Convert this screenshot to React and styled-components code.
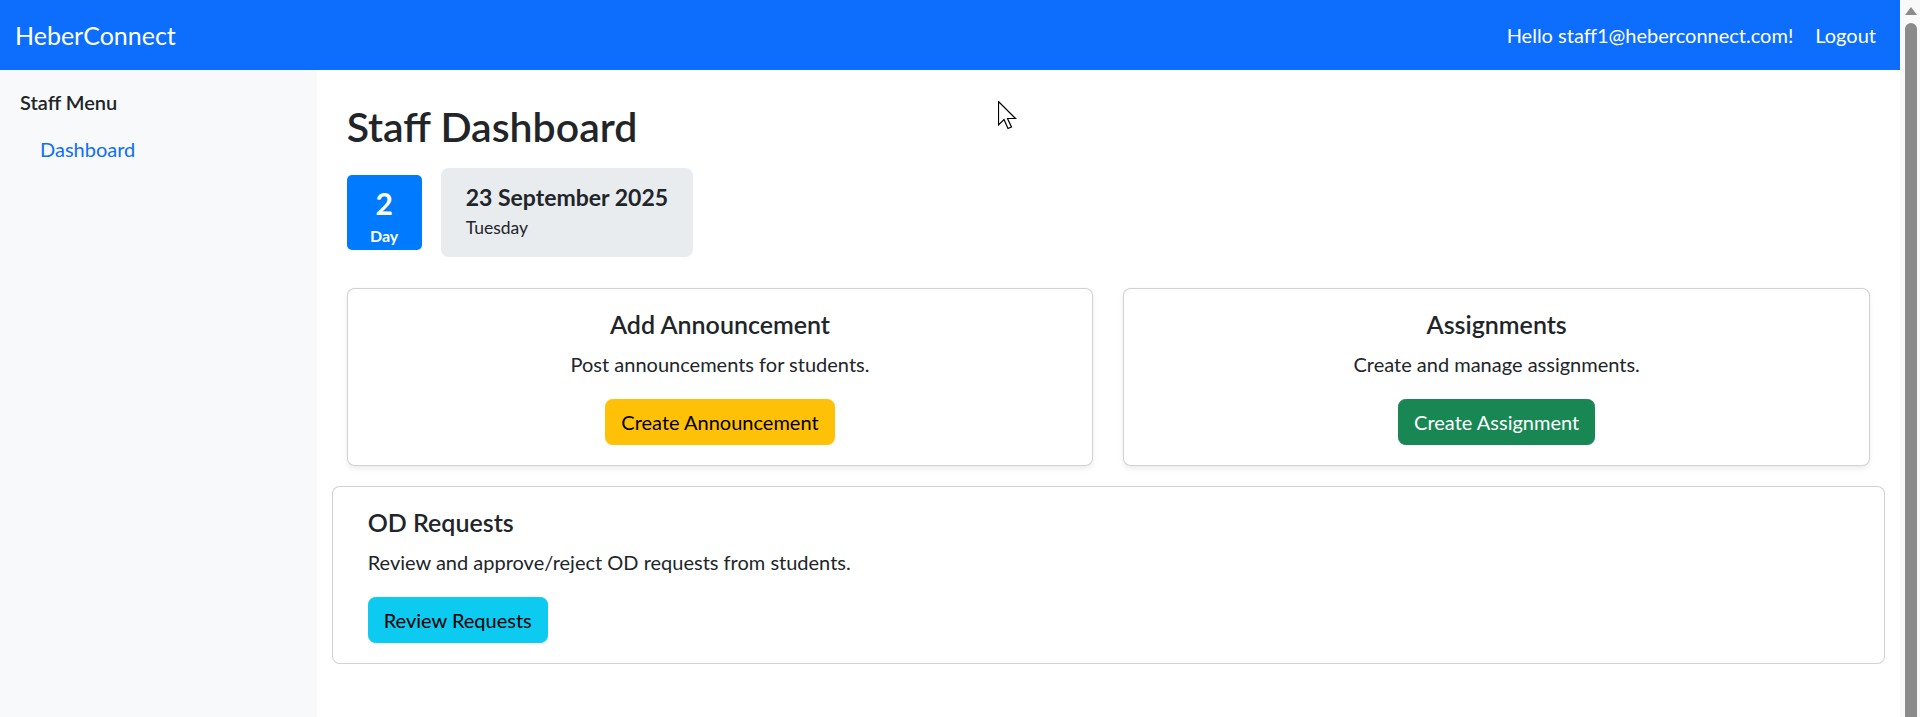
import styled, { createGlobalStyle, css } from "styled-components"

const GlobalStyle = createGlobalStyle`
    html, body {
        margin: 0;
        padding: 0;
        height: 100%;
        overflow: hidden;
    }
    body {
        font-family: Lato, "Noto Sans", "Liberation Sans", sans-serif;
        color: #212529;
        background: #fff;
    }
    * { box-sizing: border-box; }
`

const Shell = styled.div`
    display: flex;
    height: 100vh;
    position: relative;
`

const Page = styled.div`
    flex: 1;
    min-width: 0;
    display: flex;
    flex-direction: column;
`

// fake browser scrollbar on the right edge
const Scrollbar = styled.div`
    width: 20px;
    background: #f9f9f9;
    display: flex;
    flex-direction: column;
    align-items: center;
    padding-top: 7px;
`

const ScrollArrow = styled.div`
    width: 0;
    height: 0;
    border-left: 6px solid transparent;
    border-right: 6px solid transparent;
    border-bottom: 8px solid #8b8b8b;
    margin-left: 1px;
`

const ScrollThumb = styled.div`
    flex: 1;
    width: 12px;
    margin-top: 8px;
    margin-left: 1px;
    background: #8b8b8b;
    border-radius: 6px 6px 0 0;
`

const Navbar = styled.nav`
    height: 70px;
    background: #0d6efd;
    display: flex;
    align-items: center;
    justify-content: space-between;
    padding: 0 14px 0 15px;
    color: #fff;
`

const Brand = styled.a`
    font-size: 25px;
    color: #fff;
    text-decoration: none;
`

const NavRight = styled.div`
    display: flex;
    align-items: center;
    font-size: 20px;
`

const Greeting = styled.span`
    margin-right: 12px;
`

const NavLink = styled.a`
    padding: 10px;
    color: #fff;
    text-decoration: none;
`

const Body = styled.div`
    flex: 1;
    display: flex;
`

const Sidebar = styled.aside`
    flex: 0 0 316.67px;
    background: #f8f9fa;
    padding: 20px;
`

const SidebarTitle = styled.h5`
    margin: 0 0 10px;
    font-size: 20px;
    font-weight: 600;
    line-height: 1.2;
`

const SideLink = styled.a`
    display: block;
    padding: 10px 20px;
    font-size: 20px;
    line-height: 1.5;
    color: #0d6efd;
    text-decoration: none;
`

const Main = styled.main`
    flex: 1;
    min-width: 0;
    padding: 32px 30px 0;
`

const Title = styled.h2`
    margin: 0 0 17px;
    font-size: 41px;
    font-weight: 600;
    line-height: 1.2;
`

const DateRow = styled.div`
    display: flex;
    align-items: center;
    gap: 19px;
    margin-bottom: 31px;
`

const DayBadge = styled.div`
    width: 75px;
    height: 75px;
    border-radius: 5px;
    background: #007bff;
    color: #fff;
    display: flex;
    flex-direction: column;
    align-items: center;
    padding-top: 12px;
    font-weight: 700;
`

const DayNumber = styled.div`
    font-size: 30px;
    line-height: 33px;
`

const DayLabel = styled.div`
    font-size: 16px;
    line-height: 22px;
    margin-top: 5px;
`

const DateCard = styled.div`
    background: #e9ecef;
    border-radius: 7.5px;
    padding: 15px 25px 16px;
`

const DateText = styled.div`
    font-size: 23px;
    font-weight: 700;
    line-height: 28px;
    margin-bottom: 4px;
`

const Weekday = styled.div`
    font-size: 17.5px;
    line-height: 26px;
    margin-top: 2px;
`

const CardRow = styled.div`
    display: grid;
    grid-template-columns: 1fr 1fr;
    gap: 30px;
    margin-bottom: 20px;
`

const Card = styled.div`
    background: #fff;
    border: 1px solid rgba(0, 0, 0, 0.175);
    border-radius: 7.5px;
    padding: ${p => (p.$wide ? "20px 35px" : "20px")};
    text-align: ${p => (p.$center ? "center" : "left")};
    ${p => p.$shadow && css`box-shadow: 0 2.5px 5px rgba(0, 0, 0, 0.075);`}
    ${p => p.$wide && css`margin: 0 -15px;`}
`

const CardTitle = styled.h5`
    margin: 0 0 10px;
    font-size: 25px;
    font-weight: 600;
    line-height: 1.2;
`

const CardText = styled.p`
    margin: 0 0 20px;
    font-size: 20px;
    line-height: 1.5;
`

const variants = {
    warning: { bg: "#ffc107", color: "#000" },
    success: { bg: "#198754", color: "#fff" },
    info: { bg: "#0dcaf0", color: "#000" },
}

const Button = styled.button`
    font-family: inherit;
    font-size: 20px;
    line-height: 1.5;
    padding: 7px 15px;
    border-radius: 7.5px;
    border: 1px solid ${p => variants[p.$variant].bg};
    background: ${p => variants[p.$variant].bg};
    color: ${p => variants[p.$variant].color};
    cursor: pointer;
`

const Cursor = styled.svg`
    position: absolute;
    left: 998px;
    top: 101px;
    pointer-events: none;
`

export default function App() {
    return (
        <>
            <GlobalStyle />
            <Shell>
                <Page>
                    <Navbar>
                        <Brand href="#">HeberConnect</Brand>
                        <NavRight>
                            <Greeting>Hello staff1@heberconnect.com!</Greeting>
                            <NavLink href="#">Logout</NavLink>
                        </NavRight>
                    </Navbar>
                    <Body>
                        <Sidebar>
                            <SidebarTitle>Staff Menu</SidebarTitle>
                            <SideLink href="#">Dashboard</SideLink>
                        </Sidebar>
                        <Main>
                            <Title>Staff Dashboard</Title>
                            <DateRow>
                                <DayBadge>
                                    <DayNumber>2</DayNumber>
                                    <DayLabel>Day</DayLabel>
                                </DayBadge>
                                <DateCard>
                                    <DateText>23 September 2025</DateText>
                                    <Weekday>Tuesday</Weekday>
                                </DateCard>
                            </DateRow>
                            <CardRow>
                                <Card $center $shadow>
                                    <CardTitle>Add Announcement</CardTitle>
                                    <CardText>Post announcements for students.</CardText>
                                    <Button $variant="warning">Create Announcement</Button>
                                </Card>
                                <Card $center $shadow>
                                    <CardTitle>Assignments</CardTitle>
                                    <CardText>Create and manage assignments.</CardText>
                                    <Button $variant="success">Create Assignment</Button>
                                </Card>
                            </CardRow>
                            <Card $wide>
                                <CardTitle>OD Requests</CardTitle>
                                <CardText>Review and approve/reject OD requests from students.</CardText>
                                <Button $variant="info">Review Requests</Button>
                            </Card>
                        </Main>
                    </Body>
                </Page>
                <Scrollbar>
                    <ScrollArrow />
                    <ScrollThumb />
                </Scrollbar>
                <Cursor width="19" height="29" viewBox="0 0 19 29">
                    <path d="M0.5 0.5 V24 L6 18.5 L10 27.5 L13.5 26 L9.5 17.5 H17.5 Z" fill="#fff" stroke="#000" strokeWidth="1.2" strokeLinejoin="miter" />
                </Cursor>
            </Shell>
        </>
    )
}
